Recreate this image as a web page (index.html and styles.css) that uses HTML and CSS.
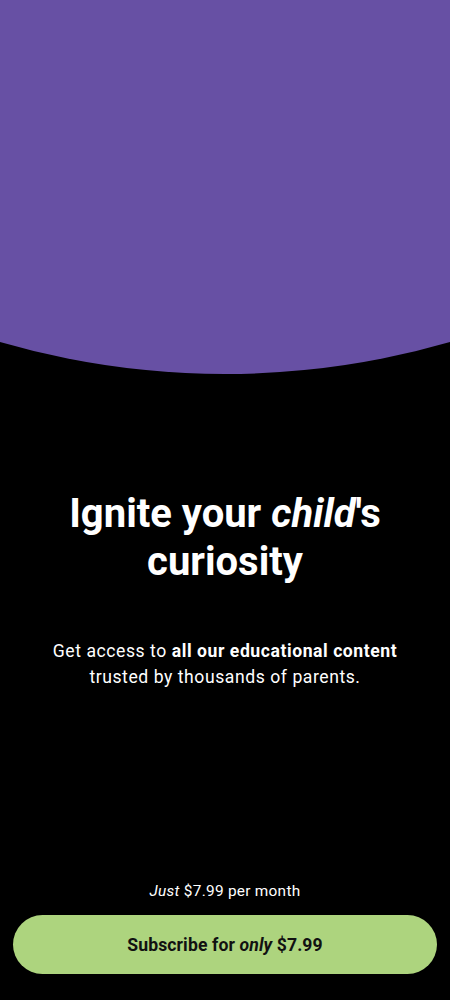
FILE: index.html
```html
<!DOCTYPE html>
<html lang="en">
<head>
<meta charset="utf-8">
<title>Subscribe</title>
<link rel="stylesheet" href="styles.css">
</head>
<body>
<div class="screen">
  <div class="hero"></div>
  <main class="content">
    <h1 class="title">Ignite your <em>child</em>'s curiosity</h1>
    <p class="subtitle">Get access to <strong>all our educational content</strong> trusted by thousands of parents.</p>
  </main>
  <footer class="footer">
    <p class="price"><em>Just</em> $7.99 per month</p>
    <button class="cta">Subscribe for <em>only</em> $7.99</button>
  </footer>
</div>
</body>
</html>
```
FILE: styles.css
```css
* { box-sizing: border-box; }
html, body { margin: 0; padding: 0; background: #000; }
body { font-family: Roboto, "Noto Sans", sans-serif; color: #fff; }
.screen {
  min-height: 1000px;
  display: flex;
  flex-direction: column;
}
.hero {
  height: 375px;
  background: #6750A4;
  clip-path: circle(807px at 50% -433px);
}
.content {
  flex: 1;
  display: flex;
  flex-direction: column;
  align-items: center;
  padding: 115px 24px 0;
}
.title {
  margin: 0;
  font-size: 40px;
  line-height: 48px;
  font-weight: 700;
  text-align: center;
  letter-spacing: 0;
}
.title em { font-style: italic; }
.subtitle {
  margin: 52px 0 0;
  font-size: 17.6px;
  line-height: 26.4px;
  letter-spacing: 0.55px;
  text-align: center;
}
.subtitle strong { font-weight: 700; }
.footer {
  display: flex;
  flex-direction: column;
  align-items: center;
  padding: 0 13px 26px;
}
.price {
  margin: 0 0 13px;
  font-size: 15.4px;
  line-height: 22px;
  letter-spacing: 0.27px;
}
.cta {
  width: 100%;
  height: 59px;
  border: none;
  border-radius: 30px;
  background: #ADD47E;
  color: #111;
  font-family: Roboto, "Noto Sans", sans-serif;
  font-size: 17.6px;
  font-weight: 700;
  letter-spacing: 0.11px;
  cursor: pointer;
}
```
